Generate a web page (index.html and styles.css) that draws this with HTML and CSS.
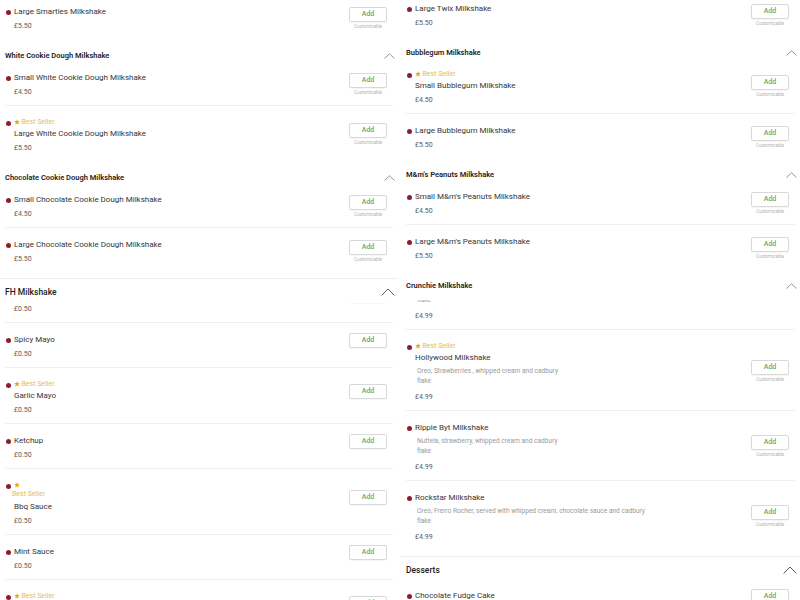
FILE: index.html
```html
<!DOCTYPE html>
<html lang="en">
<head>
<meta charset="utf-8">
<title>Menu</title>
<link rel="stylesheet" href="styles.css">
</head>
<body>
<div class="page">
  <div class="col col-left">
    <section class="cat">
      <div class="clip h40">
        <div class="row last">
          <div class="dotcol"><span class="dot"></span></div>
          <div class="info"><div class="name">Large Smarties Milkshake</div><div class="price">£5.50</div></div>
          <div class="act"><button class="add">Add</button><div class="cust">Customizable</div></div>
        </div>
      </div>
      <div class="subhead"><span>White Cookie Dough Milkshake</span><svg class="chev" width="11" height="6" viewBox="0 0 11 6"><polyline points="0.5,5.5 5.5,0.8 10.5,5.5"/></svg></div>
      <div class="row">
        <div class="dotcol"><span class="dot"></span></div>
        <div class="info"><div class="name">Small White Cookie Dough Milkshake</div><div class="price">£4.50</div></div>
        <div class="act"><button class="add">Add</button><div class="cust">Customizable</div></div>
      </div>
      <div class="row last">
        <div class="dotcol"><span class="dot"></span></div>
        <div class="info"><div class="tagline"><svg class="star" width="6" height="6" viewBox="0 0 10 10"><polygon points="5,0.3 6.3,3.4 9.7,3.6 7.1,5.8 7.9,9.4 5,7.5 2.1,9.4 2.9,5.8 0.3,3.6 3.7,3.4"/></svg><span class="tag">Best Seller</span></div><div class="name">Large White Cookie Dough Milkshake</div><div class="price">£5.50</div></div>
        <div class="act"><button class="add">Add</button><div class="cust">Customizable</div></div>
      </div>
      <div class="subhead"><span>Chocolate Cookie Dough Milkshake</span><svg class="chev" width="11" height="6" viewBox="0 0 11 6"><polyline points="0.5,5.5 5.5,0.8 10.5,5.5"/></svg></div>
      <div class="row">
        <div class="dotcol"><span class="dot"></span></div>
        <div class="info"><div class="name">Small Chocolate Cookie Dough Milkshake</div><div class="price">£4.50</div></div>
        <div class="act"><button class="add">Add</button><div class="cust">Customizable</div></div>
      </div>
      <div class="row last">
        <div class="dotcol"><span class="dot"></span></div>
        <div class="info"><div class="name">Large Chocolate Cookie Dough Milkshake</div><div class="price">£5.50</div></div>
        <div class="act"><button class="add">Add</button><div class="cust">Customizable</div></div>
      </div>
    </section>
    <section class="cat open">
      <div class="tophead sticky"><span>FH Milkshake</span><svg class="chev-big" width="14" height="8" viewBox="0 0 14 8"><polyline points="0.6,7.4 7,1 13.4,7.4"/></svg></div>
      <div class="clip h20">
        <div class="row">
          <div class="dotcol"><span class="dot"></span></div>
          <div class="info"><div class="name">Mayo</div><div class="price">£0.50</div></div>
          <div class="act"><button class="add">Add</button><div class="cust none"></div></div>
        </div>
      </div>
      <div class="row">
        <div class="dotcol"><span class="dot"></span></div>
        <div class="info"><div class="name">Spicy Mayo</div><div class="price">£0.50</div></div>
        <div class="act"><button class="add">Add</button><div class="cust none"></div></div>
      </div>
      <div class="row">
        <div class="dotcol"><span class="dot"></span></div>
        <div class="info"><div class="tagline"><svg class="star" width="6" height="6" viewBox="0 0 10 10"><polygon points="5,0.3 6.3,3.4 9.7,3.6 7.1,5.8 7.9,9.4 5,7.5 2.1,9.4 2.9,5.8 0.3,3.6 3.7,3.4"/></svg><span class="tag">Best Seller</span></div><div class="name">Garlic Mayo</div><div class="price">£0.50</div></div>
        <div class="act"><button class="add">Add</button><div class="cust none"></div></div>
      </div>
      <div class="row">
        <div class="dotcol"><span class="dot"></span></div>
        <div class="info"><div class="name">Ketchup</div><div class="price">£0.50</div></div>
        <div class="act"><button class="add">Add</button><div class="cust none"></div></div>
      </div>
      <div class="row">
        <div class="dotcol"><span class="dot"></span></div>
        <div class="info"><div class="tagline two"><svg class="star" width="6" height="6" viewBox="0 0 10 10"><polygon points="5,0.3 6.3,3.4 9.7,3.6 7.1,5.8 7.9,9.4 5,7.5 2.1,9.4 2.9,5.8 0.3,3.6 3.7,3.4"/></svg><br><span class="tag wrapped">Best Seller</span></div><div class="name">Bbq Sauce</div><div class="price">£0.50</div></div>
        <div class="act"><button class="add">Add</button><div class="cust none"></div></div>
      </div>
      <div class="row">
        <div class="dotcol"><span class="dot"></span></div>
        <div class="info"><div class="name">Mint Sauce</div><div class="price">£0.50</div></div>
        <div class="act"><button class="add">Add</button><div class="cust none"></div></div>
      </div>
      <div class="row">
        <div class="dotcol"><span class="dot"></span></div>
        <div class="info"><div class="tagline"><svg class="star" width="6" height="6" viewBox="0 0 10 10"><polygon points="5,0.3 6.3,3.4 9.7,3.6 7.1,5.8 7.9,9.4 5,7.5 2.1,9.4 2.9,5.8 0.3,3.6 3.7,3.4"/></svg><span class="tag">Best Seller</span></div><div class="name">Sweet Chilli Sauce</div><div class="price">£0.50</div></div>
        <div class="act"><button class="add">Add</button><div class="cust none"></div></div>
      </div>
    </section>
  </div>

  <div class="col col-right">
    <section class="cat">
      <div class="clip h37">
        <div class="row last">
          <div class="dotcol"><span class="dot"></span></div>
          <div class="info"><div class="name">Large Twix Milkshake</div><div class="price">£5.50</div></div>
          <div class="act"><button class="add">Add</button><div class="cust">Customizable</div></div>
        </div>
      </div>
      <div class="subhead"><span>Bubblegum Milkshake</span><svg class="chev" width="11" height="6" viewBox="0 0 11 6"><polyline points="0.5,5.5 5.5,0.8 10.5,5.5"/></svg></div>
      <div class="row">
        <div class="dotcol"><span class="dot"></span></div>
        <div class="info"><div class="tagline"><svg class="star" width="6" height="6" viewBox="0 0 10 10"><polygon points="5,0.3 6.3,3.4 9.7,3.6 7.1,5.8 7.9,9.4 5,7.5 2.1,9.4 2.9,5.8 0.3,3.6 3.7,3.4"/></svg><span class="tag">Best Seller</span></div><div class="name">Small Bubblegum Milkshake</div><div class="price">£4.50</div></div>
        <div class="act"><button class="add">Add</button><div class="cust">Customizable</div></div>
      </div>
      <div class="row last">
        <div class="dotcol"><span class="dot"></span></div>
        <div class="info"><div class="name">Large Bubblegum Milkshake</div><div class="price">£5.50</div></div>
        <div class="act"><button class="add">Add</button><div class="cust">Customizable</div></div>
      </div>
      <div class="subhead"><span>M&amp;m's Peanuts Milkshake</span><svg class="chev" width="11" height="6" viewBox="0 0 11 6"><polyline points="0.5,5.5 5.5,0.8 10.5,5.5"/></svg></div>
      <div class="row">
        <div class="dotcol"><span class="dot"></span></div>
        <div class="info"><div class="name">Small M&amp;m's Peanuts Milkshake</div><div class="price">£4.50</div></div>
        <div class="act"><button class="add">Add</button><div class="cust">Customizable</div></div>
      </div>
      <div class="row last">
        <div class="dotcol"><span class="dot"></span></div>
        <div class="info"><div class="name">Large M&amp;m's Peanuts Milkshake</div><div class="price">£5.50</div></div>
        <div class="act"><button class="add">Add</button><div class="cust">Customizable</div></div>
      </div>
      <div class="subhead sticky"><span>Crunchie Milkshake</span><svg class="chev" width="11" height="6" viewBox="0 0 11 6"><polyline points="0.5,5.5 5.5,0.8 10.5,5.5"/></svg></div>
      <div class="clip h30">
        <div class="row">
          <div class="dotcol"><span class="dot"></span></div>
          <div class="info"><div class="name">Crunchie Milkshake</div><div class="desc">Crunchie, whipped cream and cadbury<br>flake</div><div class="price">£4.99</div></div>
          <div class="act"><button class="add">Add</button><div class="cust none"></div></div>
        </div>
      </div>
      <div class="row">
        <div class="dotcol"><span class="dot"></span></div>
        <div class="info"><div class="tagline"><svg class="star" width="6" height="6" viewBox="0 0 10 10"><polygon points="5,0.3 6.3,3.4 9.7,3.6 7.1,5.8 7.9,9.4 5,7.5 2.1,9.4 2.9,5.8 0.3,3.6 3.7,3.4"/></svg><span class="tag">Best Seller</span></div><div class="name">Hollywood Milkshake</div><div class="desc">Oreo, Strawberries , whipped cream and cadbury<br>flake</div><div class="price">£4.99</div></div>
        <div class="act"><button class="add">Add</button><div class="cust">Customizable</div></div>
      </div>
      <div class="row">
        <div class="dotcol"><span class="dot"></span></div>
        <div class="info"><div class="name">Ripple Byt Milkshake</div><div class="desc">Nuttela, strawberry, whipped cream and cadbury<br>flake</div><div class="price">£4.99</div></div>
        <div class="act"><button class="add">Add</button><div class="cust">Customizable</div></div>
      </div>
      <div class="row last">
        <div class="dotcol"><span class="dot"></span></div>
        <div class="info"><div class="name">Rockstar Milkshake</div><div class="desc">Oreo, Frerro Rocher, served with whipped cream, chocolate sauce and cadbury<br>flake</div><div class="price">£4.99</div></div>
        <div class="act"><button class="add">Add</button><div class="cust">Customizable</div></div>
      </div>
    </section>
    <section class="cat open">
      <div class="tophead"><span>Desserts</span><svg class="chev-big" width="14" height="8" viewBox="0 0 14 8"><polyline points="0.6,7.4 7,1 13.4,7.4"/></svg></div>
      <div class="row">
        <div class="dotcol"><span class="dot"></span></div>
        <div class="info"><div class="name">Chocolate Fudge Cake</div><div class="price">£4.99</div></div>
        <div class="act"><button class="add">Add</button><div class="cust none"></div></div>
      </div>
    </section>
  </div>
</div>
</body>
</html>
```

FILE: styles.css
```css
html, body {
  margin: 0;
  padding: 0;
  height: 600px;
  overflow: hidden;
  background: #ffffff;
}
body {
  font-family: Roboto, "Liberation Sans", sans-serif;
  color: #363636;
}
.page {
  display: flex;
  gap: 4px;
  align-items: flex-start;
}
.col {
  display: flex;
  flex-direction: column;
}
.col-left {
  width: 397px;
}
.col-right {
  flex: 1;
}
.cat {
  padding: 0 4px 5px 5px;
  border-bottom: 1px solid #ececec;
}
.col-right .cat {
  padding-right: 5px;
}
.cat.open {
  padding-bottom: 0;
  border-bottom: none;
}
.clip {
  display: flex;
  flex-direction: column;
  justify-content: flex-end;
  overflow: hidden;
}
.clip > .row { flex-shrink: 0; }
.h40 { height: 40px; }
.h37 { height: 37px; }
.h20 { height: 20px; }
.h30 { height: 30px; }

.subhead {
  display: flex;
  justify-content: space-between;
  align-items: center;
  margin-right: -2px;
  padding: 11px 0 0;
  height: 10px;
  font-size: 7.5px;
  line-height: 10px;
  font-weight: 600;
  color: #1c1c1c;
  background: #fff;
}
.subhead.sticky { padding-bottom: 9px; }
.tophead {
  display: flex;
  justify-content: space-between;
  align-items: center;
  margin-right: -2px;
  padding: 7px 0 3px;
  height: 12px;
  font-size: 8.5px;
  line-height: 12px;
  font-weight: 500;
  color: #1c1c1c;
  background: #fff;
}
.tophead.sticky { padding-bottom: 5px; }
.chev { display: block; }
.chev-big { display: block; }
.chev polyline {
  fill: none;
  stroke: #8a8a8a;
  stroke-width: 0.9;
}
.chev-big polyline {
  fill: none;
  stroke: #4a4a4a;
  stroke-width: 0.9;
}
.row {
  display: flex;
  align-items: center;
  padding: 12px 6px 8px 0;
  border-bottom: 1px solid #efefef;
}
.row.last { border-bottom-color: transparent; }
.dotcol {
  align-self: flex-start;
  width: 9px;
  flex-shrink: 0;
}
.dot {
  display: block;
  width: 5px;
  height: 5px;
  margin: 2.5px 0 0 0.5px;
  border-radius: 50%;
  background: #8e1c2a;
}
.info {
  flex: 1;
  min-width: 0;
}
.tagline {
  height: 8px;
  font-size: 7px;
  line-height: 8px;
  color: #e2bd55;
  white-space: nowrap;
}
.tagline.two {
  height: 18px;
  line-height: 9px;
}
.star {
  vertical-align: -0.5px;
  margin-right: 1.5px;
}
.star polygon { fill: #e4aa1c; }
.tag.wrapped { margin-left: -2px; }
.name {
  height: 10px;
  font-size: 8px;
  line-height: 10px;
  color: #363636;
  white-space: nowrap;
}
.tagline + .name { margin-top: 3px; }
.desc {
  margin-top: 3px;
  padding-left: 2px;
  font-size: 6.6px;
  line-height: 10px;
  color: #9a9a9a;
  white-space: nowrap;
}
.price {
  height: 10px;
  margin-top: 4px;
  font-size: 7px;
  line-height: 10px;
  color: #5a5a5a;
}
.desc + .price { margin-top: 6px; }
.act {
  display: flex;
  flex-direction: column;
  align-items: center;
  width: 38px;
  margin: -2px 0;
  flex-shrink: 0;
}
.add {
  box-sizing: border-box;
  width: 38px;
  height: 15px;
  padding: 0;
  border: 1px solid #d9d9d9;
  border-radius: 2px;
  background: #fff;
  box-shadow: 0 1px 1px rgba(0,0,0,0.04);
  font-family: Roboto, "Liberation Sans", sans-serif;
  font-size: 7px;
  font-weight: 500;
  color: #62ad62;
  line-height: 13px;
}
.cust {
  height: 10px;
  font-size: 4.6px;
  line-height: 9px;
  color: #b3b3b3;
  white-space: nowrap;
}
.cust.none { height: 13px; }
```
